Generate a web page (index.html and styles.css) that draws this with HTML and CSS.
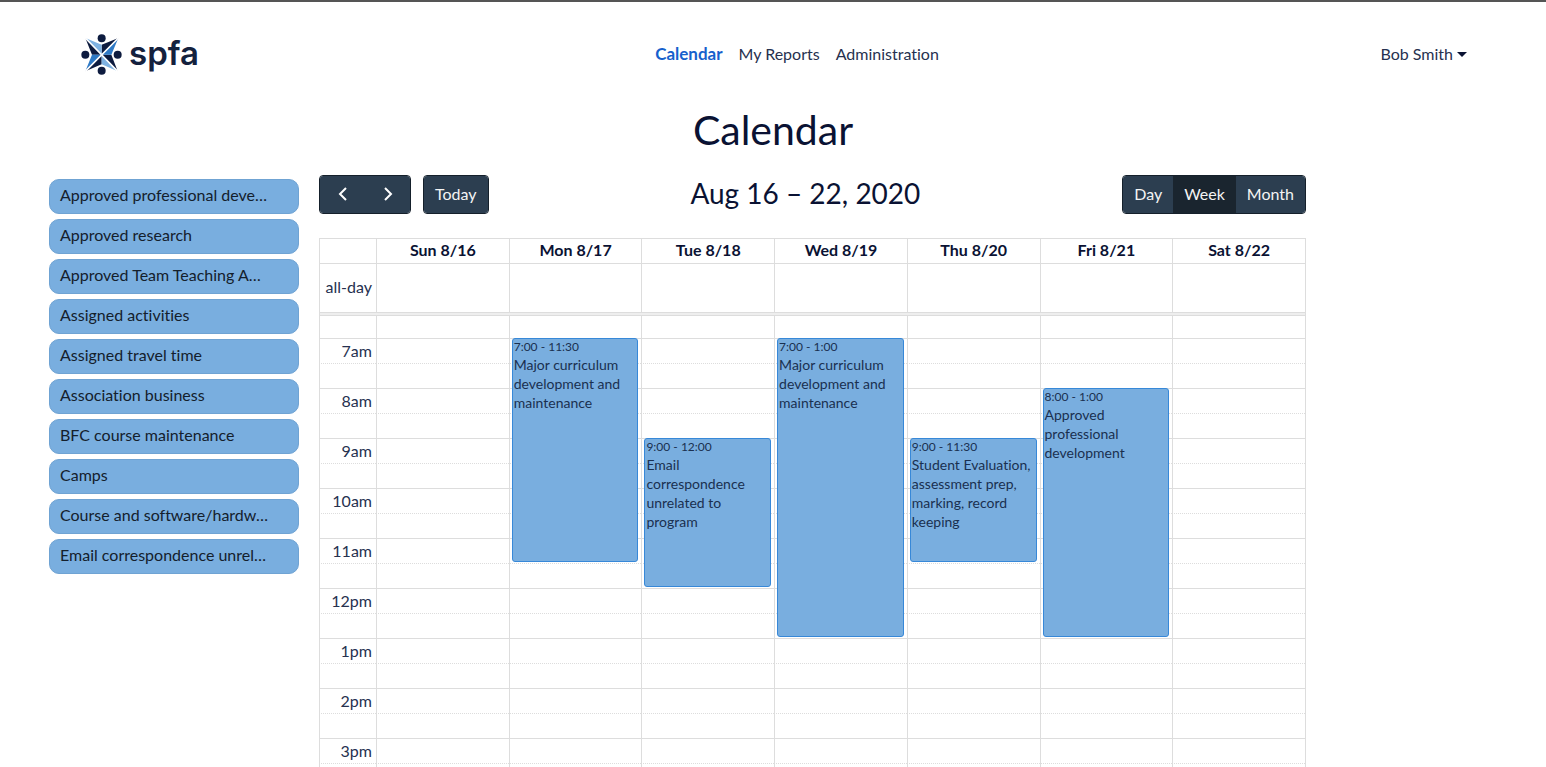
FILE: index.html
```html
<!DOCTYPE html>
<html lang="en">
<head>
<meta charset="utf-8">
<title>Calendar</title>
<link rel="stylesheet" href="styles.css">
</head>
<body>
<div class="page">
  <header class="navbar">
    <a class="brand" href="#">
      <svg class="brand-mark" viewBox="0 0 123 123" aria-hidden="true">
        <g fill="#0d1b3f">
          <path d="M62 32 112 12 62 62zM91 62 110 112 62 62zM62 91 13 112 62 62zM33 62 13 12 62 62z"/>
        </g>
        <g fill="#7fb2e2"><path d="M62 32 13 12 62 62zM62 91 110 112 62 62z"/></g>
        <g fill="#2f7ac6"><path d="M91 62 112 12 62 62zM33 62 13 112 62 62z"/></g>
        <path d="M13 12 110 112M112 12 13 112" stroke="#fff" stroke-width="5"/>
        <g fill="#0d1b3f">
          <circle cx="62" cy="13" r="12"/><circle cx="13" cy="62" r="12"/>
          <circle cx="110" cy="62" r="12"/><circle cx="62" cy="110" r="12"/>
        </g>
      </svg>
      <span class="brand-name">spfa</span>
    </a>
    <nav class="menu">
      <a class="menu-link current" href="#">Calendar</a>
      <a class="menu-link" href="#">My Reports</a>
      <a class="menu-link" href="#">Administration</a>
    </nav>
    <div class="account"><button class="account-button" type="button">Bob Smith</button></div>
  </header>

  <h1 class="title">Calendar</h1>

  <main class="content">
    <ul class="activities">
      <li class="activity">Approved professional deve…</li>
      <li class="activity">Approved research</li>
      <li class="activity">Approved Team Teaching A…</li>
      <li class="activity">Assigned activities</li>
      <li class="activity">Assigned travel time</li>
      <li class="activity">Association business</li>
      <li class="activity">BFC course maintenance</li>
      <li class="activity">Camps</li>
      <li class="activity">Course and software/hardw…</li>
      <li class="activity">Email correspondence unrel…</li>
    </ul>

    <section class="calendar">
      <div class="toolbar">
        <div class="toolbar-side">
          <div class="group">
            <button class="button arrow" type="button" aria-label="Previous week"><svg viewBox="0 0 10 16"><path d="M8 2 2 8l6 6"/></svg></button>
            <button class="button arrow" type="button" aria-label="Next week"><svg viewBox="0 0 10 16"><path d="m2 2 6 6-6 6"/></svg></button>
          </div>
          <div class="group"><button class="button" type="button">Today</button></div>
        </div>
        <h2 class="range">Aug 16 – 22, 2020</h2>
        <div class="group">
          <button class="button" type="button">Day</button>
          <button class="button active" type="button">Week</button>
          <button class="button" type="button">Month</button>
        </div>
      </div>

      <table class="week">
        <colgroup><col class="axis-col"><col><col><col><col><col><col><col></colgroup>
        <thead>
          <tr class="days"><td></td><th>Sun 8/16</th><th>Mon 8/17</th><th>Tue 8/18</th><th>Wed 8/19</th><th>Thu 8/20</th><th>Fri 8/21</th><th>Sat 8/22</th></tr>
        </thead>
        <tbody>
          <tr class="all-day"><th>all-day</th><td></td><td></td><td></td><td></td><td></td><td></td><td></td></tr>
          <tr class="divider"><td colspan="8"></td></tr>
          <tr class="partial"><th></th><td></td><td></td><td></td><td></td><td></td><td></td><td></td></tr>
          <tr><th>7am</th><td></td>
            <td><div class="event" style="--slots:9"><div class="time">7:00 - 11:30</div>Major curriculum development and maintenance</div></td>
            <td></td>
            <td><div class="event" style="--slots:12"><div class="time">7:00 - 1:00</div>Major curriculum development and maintenance</div></td>
            <td></td><td></td><td></td></tr>
          <tr class="half"><th></th><td></td><td></td><td></td><td></td><td></td><td></td><td></td></tr>
          <tr><th>8am</th><td></td><td></td><td></td><td></td><td></td>
            <td><div class="event" style="--slots:10"><div class="time">8:00 - 1:00</div>Approved professional development</div></td>
            <td></td></tr>
          <tr class="half"><th></th><td></td><td></td><td></td><td></td><td></td><td></td><td></td></tr>
          <tr><th>9am</th><td></td><td></td>
            <td><div class="event" style="--slots:6"><div class="time">9:00 - 12:00</div>Email correspondence unrelated to program</div></td>
            <td></td>
            <td><div class="event" style="--slots:5"><div class="time">9:00 - 11:30</div>Student Evaluation, assessment prep, marking, record keeping</div></td>
            <td></td><td></td></tr>
          <tr class="half"><th></th><td></td><td></td><td></td><td></td><td></td><td></td><td></td></tr>
          <tr><th>10am</th><td></td><td></td><td></td><td></td><td></td><td></td><td></td></tr>
          <tr class="half"><th></th><td></td><td></td><td></td><td></td><td></td><td></td><td></td></tr>
          <tr><th>11am</th><td></td><td></td><td></td><td></td><td></td><td></td><td></td></tr>
          <tr class="half"><th></th><td></td><td></td><td></td><td></td><td></td><td></td><td></td></tr>
          <tr><th>12pm</th><td></td><td></td><td></td><td></td><td></td><td></td><td></td></tr>
          <tr class="half"><th></th><td></td><td></td><td></td><td></td><td></td><td></td><td></td></tr>
          <tr><th>1pm</th><td></td><td></td><td></td><td></td><td></td><td></td><td></td></tr>
          <tr class="half"><th></th><td></td><td></td><td></td><td></td><td></td><td></td><td></td></tr>
          <tr><th>2pm</th><td></td><td></td><td></td><td></td><td></td><td></td><td></td></tr>
          <tr class="half"><th></th><td></td><td></td><td></td><td></td><td></td><td></td><td></td></tr>
          <tr><th>3pm</th><td></td><td></td><td></td><td></td><td></td><td></td><td></td></tr>
          <tr class="half"><th></th><td></td><td></td><td></td><td></td><td></td><td></td><td></td></tr>
        </tbody>
      </table>
    </section>
  </main>
</div>
</body>
</html>
```

FILE: styles.css
```css
* { box-sizing: border-box; }

body {
  margin: 0;
  color: #0a1233;
  background: #fff;
  font: 16px/24px Lato, "Noto Sans", sans-serif;
  font-variant-ligatures: none;
}

button { font: inherit; color: inherit; }

.page {
  height: 100vh;
  overflow: hidden;
  border-top: 2px solid #555;
}

.navbar {
  display: grid;
  grid-template-columns: 1fr auto 1fr;
  align-items: center;
  height: 104px;
  padding: 0 79px 0 81px;
}

.brand {
  display: flex;
  align-items: center;
  gap: 7px;
  color: #14213d;
  text-decoration: none;
}

.brand-mark { width: 41px; height: 41px; }

.brand-name {
  padding-bottom: 2px;
  font: 600 33px/40px Inter, Arial, sans-serif;
}

.menu { display: flex; gap: 16px; padding-left: 46px; }
.menu-link { color: #26314f; text-decoration: none; }
.menu-link.current { color: #1660cc; font-size: 17px; font-weight: 700; }

.account { text-align: right; }

.account-button {
  display: inline-flex;
  align-items: center;
  gap: 4px;
  padding: 0;
  border: 0;
  background: none;
  color: #26314f;
}

.account-button::after {
  content: "";
  border: 5px solid transparent;
  border-top-color: #0a1233;
  border-bottom: 0;
}

.title {
  margin: 0;
  font-size: 41px;
  font-weight: 400;
  line-height: 48px;
  text-align: center;
}

.content {
  display: grid;
  grid-template-columns: 250px minmax(0, 1fr);
  gap: 20px;
  padding: 20px 240px 0 49px;
}

.activities {
  display: flex;
  flex-direction: column;
  gap: 5px;
  margin: 0;
  padding: 5px 0 0;
  list-style: none;
}

.activity {
  height: 35px;
  padding: 3px 10px;
  border: 1px solid #6fa3d3;
  border-radius: 10px;
  background: #79aedf;
  color: #14202c;
  white-space: nowrap;
}

.toolbar {
  display: flex;
  align-items: center;
  justify-content: space-between;
  height: 40px;
  margin-bottom: 24px;
}

.toolbar-side { display: flex; gap: 12px; }

.group {
  display: flex;
  border: 1px solid #15202b;
  border-radius: 4px;
  overflow: hidden;
}

.button {
  height: 37px;
  padding: 0 11px 1px;
  border: 0;
  background: #2c3e50;
  color: #f4f4f4;
}

.button.active { background: #1a252f; }

.arrow { display: grid; place-items: center; width: 45px; }

.arrow svg {
  width: 10px;
  height: 16px;
  fill: none;
  stroke: #fff;
  stroke-width: 2;
}

.range {
  margin: 0;
  padding-bottom: 2px;
  font-size: 28px;
  font-weight: 400;
  line-height: 36px;
}

.week {
  width: 100%;
  table-layout: fixed;
  border-collapse: separate;
  border-spacing: 0;
  border-right: 1px solid #ddd;
}

.axis-col { width: 57px; }

.week th,
.week td {
  position: relative;
  height: 25px;
  padding: 0;
  border: 0 solid #ddd;
  border-width: 1px 0 0 1px;
}

.week thead th {
  padding-bottom: 2px;
  line-height: 22px;
  font-weight: 700;
}

.week tbody th {
  padding-right: 4px;
  font-weight: 400;
  text-align: right;
  color: #26314f;
}

.week .all-day th, .week .all-day td { height: 49px; padding-bottom: 2px; }
.week .divider td { height: 3px; background: #eee; }
.week .partial th, .week .partial td { height: 23px; }
.week .half th, .week .half td { border-top-style: dotted; }

.event {
  position: absolute;
  z-index: 1;
  top: -1px;
  left: 2px;
  right: 3px;
  height: calc(var(--slots) * 25px - 1px);
  padding: 0 1px;
  border: 1px solid #3788d8;
  border-radius: 3px;
  background: #79aedf;
  color: #1a3050;
  font-size: 14px;
  line-height: 19px;
}

.time { font-size: 12px; line-height: 16px; }
```
